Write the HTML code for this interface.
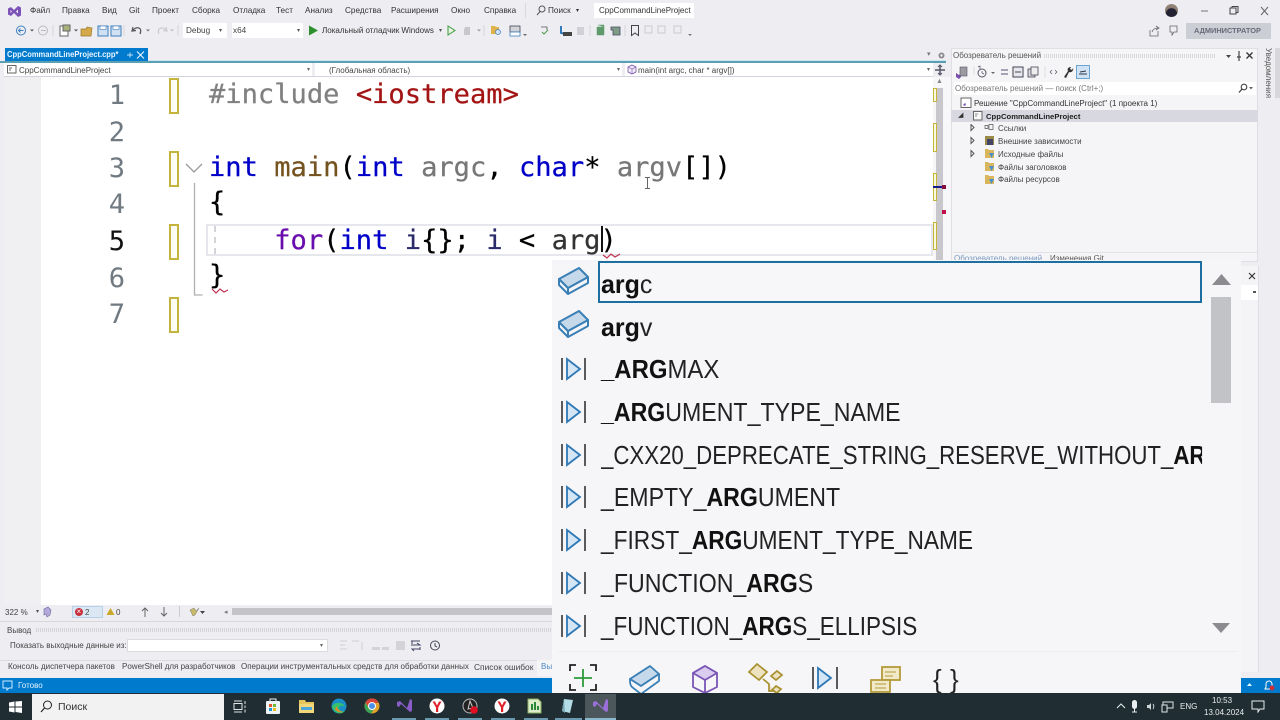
<!DOCTYPE html>
<html><head><meta charset="utf-8">
<style>
*{box-sizing:border-box}
html,body{margin:0;padding:0;width:1280px;height:720px;overflow:hidden;background:#eeeef2}
body{position:relative;font-family:"Liberation Sans",sans-serif;color:#333}
.a{position:absolute;white-space:nowrap}
.m{font-size:8.2px;top:5px;line-height:12px;color:#333}
.t{font-size:8.2px;line-height:12px;color:#444}
.c{position:absolute;white-space:pre;font-family:"DejaVu Sans Mono",monospace;font-size:27.1px;line-height:36px;left:209px;color:#000;-webkit-text-stroke:.25px}
.n{position:absolute;left:101px;width:24px;text-align:right;font-family:"DejaVu Sans Mono",monospace;font-size:27.1px;line-height:36px;color:#707a80}
.y{position:absolute;left:169px;width:10px;height:36px;border:2px solid #c4b33c;background:#fdfdf4}
.k{color:#0000c8}.f{color:#74531f}.p{color:#808080}.s{color:#a31515}.r{color:#8f08c4}.g{color:#777}
.l{position:absolute;left:601px;font-size:26px;line-height:34px;white-space:pre;color:#222;transform-origin:0 50%}
.l b{color:#111;font-weight:700}
.i{position:absolute;left:558px}
.e{font-size:8px;line-height:12px;color:#444}
.b{background:#fff}
</style></head><body>

<!-- menu / title bar -->
<svg class="a" style="left:7px;top:5px" width="15" height="13" viewBox="0 0 15 13"><path d="M1 3.500L4 2l3 3 4-4 3 1.500v8L11 12 7 8l-3 3-3-1.500z" fill="#7d52b8"/><path d="M3.500 5v3L5 6.500zM11 4.500v4L9 6.500z" fill="#eeeef2"/></svg>
<span class="a m" style="left:30px">Файл</span>
<span class="a m" style="left:62px">Правка</span>
<span class="a m" style="left:102px">Вид</span>
<span class="a m" style="left:129px">Git</span>
<span class="a m" style="left:152px">Проект</span>
<span class="a m" style="left:192px">Сборка</span>
<span class="a m" style="left:233px">Отладка</span>
<span class="a m" style="left:276px">Тест</span>
<span class="a m" style="left:305px">Анализ</span>
<span class="a m" style="left:345px">Средства</span>
<span class="a m" style="left:391px">Расширения</span>
<span class="a m" style="left:451px">Окно</span>
<span class="a m" style="left:484px">Справка</span>
<div class="a" style="left:525px;top:3px;width:1px;height:15px;background:#d8d8de"></div>
<svg class="a" style="left:536px;top:5px" width="10" height="11" viewBox="0 0 10 11"><circle cx="6" cy="4" r="3" fill="none" stroke="#555"/><path d="M4 6.500L1 10" stroke="#555"/></svg>
<span class="a m" style="left:548px">Поиск</span>
<span class="a m" style="left:576px;font-size:6px">▾</span>
<div class="a" style="left:594px;top:3px;width:100px;height:15px;background:#fff"></div>
<span class="a m" style="left:599px;color:#333;font-size:8px">CppCommandLineProject</span>
<div class="a" style="left:1165px;top:4px;width:13px;height:13px;border-radius:50%;background:radial-gradient(circle at 50% 75%,#223 45%,#8a7a70 50%,#a08e80)"></div>
<svg class="a" style="left:1195px;top:4px" width="82" height="14" viewBox="0 0 82 14"><path d="M6 7h7" stroke="#777"/><rect x="35" y="4" width="6" height="6" fill="none" stroke="#444"/><path d="M37 4V2.500h6v6h-2" fill="none" stroke="#444"/><path d="M66 3l7 8M73 3l-7 8" stroke="#666"/></svg>

<!-- toolbar -->
<svg class="a" style="left:0;top:23px" width="700" height="15" viewBox="0 0 700 15">
<circle cx="21" cy="7.500" r="4.500" fill="none" stroke="#3f7fbf"/><path d="M23.500 7.500h-5m2-2l-2 2 2 2" fill="none" stroke="#3f7fbf"/>
<path d="M30 6.500h4l-2 2z" fill="#555"/>
<circle cx="43" cy="7.500" r="4.500" fill="none" stroke="#bbb"/><path d="M41 7.500h5" stroke="#bbb"/>
<path d="M53 2v11" stroke="#d4d4da"/>
<rect x="60" y="3" width="8" height="10" fill="#fff" stroke="#666"/><rect x="63" y="2" width="7" height="6" fill="#a8b27a" stroke="#666"/>
<path d="M74 6.500h4l-2 2z" fill="#555"/>
<path d="M81 6h5l1-2 5 1-1 8H81z" fill="#d3a94a" stroke="#9a7a2a" stroke-width=".7"/>
<rect x="98" y="3" width="10" height="10" fill="#cfe1f3" stroke="#3f7fbf"/><rect x="100" y="3" width="6" height="3.500" fill="#fff" stroke="#3f7fbf" stroke-width=".6"/>
<rect x="111" y="3" width="10" height="10" fill="#cfe1f3" stroke="#3f7fbf"/><rect x="113" y="3" width="6" height="3.500" fill="#fff" stroke="#3f7fbf" stroke-width=".6"/>
<path d="M124 2v11" stroke="#d4d4da"/>
<path d="M133 4l-1 4 4-.5M132.500 7.500C136 3 143 4 140 11" fill="none" stroke="#555" stroke-width="1.200"/>
<path d="M146 6.500h4l-2 2z" fill="#777"/>
<path d="M166 4l1 4-4-.5M166.500 7.500C163 3 156 5 159 11" fill="none" stroke="#ccc" stroke-width="1.200"/>
<path d="M170 6.500h4l-2 2z" fill="#bbb"/>
<path d="M178 2v11" stroke="#d4d4da"/>
<path d="M309 2.500l9 5-9 5z" fill="#2d8f2d"/>
<path d="M448 3v9l7-4.500z" fill="#e9f3e4" stroke="#3c9a3c"/>
<path d="M465 4h5v8h-6v-5z" fill="#c8c8cc"/>
<path d="M477 6.500h4l-2 2z" fill="#999"/>
<path d="M484 2v11" stroke="#d4d4da"/>
<path d="M491 3h4l1 1h3v7h-8z" fill="#e0b24a"/><circle cx="498" cy="9" r="2.500" fill="#cfe1f3" stroke="#3f7fbf" stroke-width=".7"/>
<rect x="510" y="3" width="10" height="6" fill="#d0d4d8" stroke="#445" stroke-width=".8"/><rect x="510" y="9" width="10" height="4" fill="#fff" stroke="#3f7fbf" stroke-width=".8"/>
<path d="M523 11h4l-2 2z" fill="#666"/>
<path d="M541 4h6v3" fill="none" stroke="#555" stroke-width=".8"/><path d="M542 9l2 2 4-4" fill="none" stroke="#4a9a4a"/>
<path d="M561 3v7l5 1" fill="none" stroke="#1f6fb5" stroke-width="1.800"/><rect x="563" y="9" width="9" height="4" fill="#444"/>
<rect x="577" y="4" width="7" height="8" fill="#d0d0d6"/>
<path d="M590 2v11" stroke="#d4d4da"/>
<path d="M597 4h7v8h-7zM598 2h6v2" fill="#5f9a6c" stroke="#5f9a6c" stroke-width=".5"/>
<path d="M611 4h9v8h-7v-5h-2z" fill="#7f9d86" stroke="#446" stroke-width=".8"/>
<path d="M625 2v11" stroke="#d4d4da"/>
<path d="M631.500 2.500h7v10l-3.500-2.500-3.500 2.500z" fill="none" stroke="#444"/>
<path d="M645 3h7v7h-7z" fill="none" stroke="#ccc"/><path d="M658 3h7v7h-7z" fill="none" stroke="#ccc"/><path d="M674 3h7v7h-7z" fill="none" stroke="#ccc"/>
<path d="M688 11h4l-2 2z" fill="#777"/>
</svg>
<div class="a b" style="left:183px;top:23px;width:44px;height:15px"></div>
<span class="a t" style="left:186px;top:25px">Debug</span><span class="a" style="left:219px;top:27px;font-size:6px;color:#555">▾</span>
<div class="a b" style="left:232px;top:23px;width:71px;height:15px"></div>
<span class="a t" style="left:233px;top:25px">x64</span><span class="a" style="left:297px;top:27px;font-size:6px;color:#555">▾</span>
<span class="a t" style="left:322px;top:25px;color:#333;font-size:8px">Локальный отладчик Windows</span>
<span class="a" style="left:439px;top:27px;font-size:6px;color:#555">▾</span>
<svg class="a" style="left:1148px;top:24px" width="34" height="14" viewBox="0 0 34 14"><path d="M2 6v6h8V7M4 8c1-3 3-4 6-4M8 2l3 2-3 2" fill="none" stroke="#666" stroke-width=".8"/><path d="M22 2h7v6h-3l-2 3V8h-2z" fill="none" stroke="#666" stroke-width=".8"/></svg>
<div class="a" style="left:1186px;top:23px;width:85px;height:16px;background:#ccced6"></div>
<span class="a" style="left:1194px;top:25px;font-size:7.4px;line-height:12px;font-weight:700;color:#6a6a78">АДМИНИСТРАТОР</span>

<!-- doc tabs -->
<div class="a" style="left:5px;top:48px;width:143px;height:14px;background:#007acc"></div>
<span class="a" style="left:7px;top:49px;font-size:8.2px;line-height:12px;font-weight:700;color:#eaf6ff;transform:scaleX(.925);transform-origin:0 0">CppCommandLineProject.cpp*</span>
<svg class="a" style="left:126px;top:50px" width="20" height="10" viewBox="0 0 20 10"><path d="M1 5h6M4 2.500v5" stroke="#bfe0f6"/><path d="M11 1.500l7 7M18 1.500l-7 7" stroke="#e8f5ff" stroke-width="1.100"/></svg>
<div class="a" style="left:0;top:61px;width:946px;height:2px;background:#5a9fb4"></div>
<div class="a" style="left:148px;top:60px;width:798px;height:1px;background:#cfe5f1"></div>
<span class="a" style="left:927px;top:50px;font-size:7px;color:#777">▾</span>
<svg class="a" style="left:937px;top:51px" width="9" height="9" viewBox="0 0 9 9"><circle cx="4.500" cy="4.500" r="3" fill="#8a8a90"/><circle cx="4.500" cy="4.500" r="1.200" fill="#eeeef2"/></svg>

<!-- nav bar -->
<div class="a b" style="left:4px;top:63px;width:929px;height:13px"></div>
<div class="a" style="left:4px;top:76px;width:929px;height:1px;background:#d0d4dc"></div>
<svg class="a" style="left:7px;top:65px" width="10" height="9" viewBox="0 0 10 9"><rect x=".5" y=".5" width="8.500" height="7.500" fill="#fff" stroke="#666"/><path d="M2 3h3M2 5h2" stroke="#666"/></svg>
<span class="a e" style="left:19px;top:65px">CppCommandLineProject</span>
<span class="a" style="left:307px;top:66px;font-size:6px;color:#666">▾</span>
<div class="a" style="left:312px;top:63px;width:3px;height:13px;background:#eeeef2"></div>
<span class="a e" style="left:329px;top:65px">(Глобальная область)</span>
<span class="a" style="left:617px;top:66px;font-size:6px;color:#666">▾</span>
<div class="a" style="left:622px;top:63px;width:3px;height:13px;background:#eeeef2"></div>
<svg class="a" style="left:627px;top:64px" width="10" height="11" viewBox="0 0 10 11"><path d="M5 1l4 2v5l-4 2-4-2V3z" fill="#f0e9f8" stroke="#7a55a8" stroke-width=".8"/><path d="M1 3l4 2 4-2M5 5v5" fill="none" stroke="#7a55a8" stroke-width=".6"/></svg>
<span class="a e" style="left:638px;top:65px">main(int argc, char * argv[])</span>
<span class="a" style="left:927px;top:66px;font-size:6px;color:#666">▾</span>
<svg class="a" style="left:934px;top:64px" width="12" height="12" viewBox="0 0 12 12"><path d="M6 1v10M1 6h10" stroke="#556" stroke-width="1.500"/><path d="M4 3l2-2 2 2M4 9l2 2 2-2" fill="none" stroke="#556"/></svg>

<!-- editor -->
<div class="a" style="left:0;top:77px;width:933px;height:528px;background:#fff"></div>
<div class="a" style="left:4px;top:77px;width:37px;height:528px;background:#f0f0f2"></div>
<div class="a" style="left:0;top:77px;width:4px;height:528px;background:#eeeef2"></div>

<div class="a" style="left:206px;top:224px;width:727px;height:32px;border:2px solid #e6e7ec;background:#fff"></div>
<div class="a" style="left:214px;top:226px;width:0;height:28px;border-left:2px dashed #d4d4d8"></div>

<div class="n" style="top:78px">1</div>
<div class="n" style="top:115px">2</div>
<div class="n" style="top:151px">3</div>
<div class="n" style="top:187px">4</div>
<div class="n" style="top:224px;color:#111">5</div>
<div class="n" style="top:261px">6</div>
<div class="n" style="top:297px">7</div>

<div class="y" style="top:78px"></div>
<div class="y" style="top:151px"></div>
<div class="y" style="top:224px"></div>
<div class="y" style="top:297px"></div>

<svg class="a" style="left:184px;top:160px" width="30" height="140" viewBox="0 0 30 140"><path d="M2 4l8 8 8-8" fill="none" stroke="#9a9a9e" stroke-width="1.300"/><path d="M10.500 23v112h8" fill="none" stroke="#b0b0b4" stroke-width="1.300"/></svg>

<div class="c" style="top:77px"><span class="p">#include</span> <span class="s">&lt;iostream&gt;</span></div>
<div class="c" style="top:150px"><span class="k">int</span> <span class="f">main</span>(<span class="k">int</span> <span class="g">argc</span>, <span class="k">char</span>* <span class="g">argv</span>[])</div>
<div class="c" style="top:185px">{</div>
<div class="c" style="top:223px">    <span style="color:#6a0dad">for</span>(<span class="k">int</span> <span style="color:#2b2b6b">i</span>{}; <span style="color:#2b2b6b">i</span> &lt; <span style="color:#333">arg</span>)</div>
<div class="c" style="top:258px">}</div>
<div class="a" style="left:601px;top:226px;width:1.500px;height:26px;background:#111"></div>
<svg class="a" style="left:211px;top:287px" width="18" height="8" viewBox="0 0 18 8"><path d="M1 2l4 4 4-4 4 3 4-2" fill="none" stroke="#c03050" stroke-width="1.200"/></svg>
<svg class="a" style="left:602px;top:251px" width="20" height="8" viewBox="0 0 20 8"><path d="M1 4l4 3 4-4 4 3 5-3" fill="none" stroke="#c03050" stroke-width="1.200"/></svg>
<svg class="a" style="left:644px;top:177px" width="7" height="12" viewBox="0 0 7 12"><path d="M1 .5h5M1 11.500h5M3.500 .5v11" stroke="#666" fill="none"/></svg>

<!-- editor scrollbar -->
<div class="a" style="left:933px;top:77px;width:18px;height:528px;background:#f7f7f9"></div>
<div class="a" style="left:936px;top:88px;width:7px;height:517px;background:#c8c8cc"></div>
<span class="a" style="left:936px;top:78px;font-size:7px;color:#888">▲</span>
<div class="a" style="left:933px;top:88px;width:4px;height:14px;background:#fbf8e0;border:1px solid #c4b33c"></div>
<div class="a" style="left:933px;top:123px;width:4px;height:29px;background:#fbf8e0;border:1px solid #c4b33c"></div>
<div class="a" style="left:933px;top:173px;width:4px;height:28px;background:#fbf8e0;border:1px solid #c4b33c"></div>
<div class="a" style="left:933px;top:222px;width:4px;height:28px;background:#fbf8e0;border:1px solid #c4b33c"></div>
<div class="a" style="left:933px;top:186px;width:10px;height:2px;background:#1a1a8a"></div>
<div class="a" style="left:942px;top:185px;width:4px;height:4px;background:#8a1040"></div>
<div class="a" style="left:942px;top:210px;width:4px;height:4px;background:#c01048"></div>

<!-- editor footer -->
<div class="a" style="left:0;top:605px;width:946px;height:14px;background:#eeeef2"></div>
<span class="a e" style="left:5px;top:607px;color:#444">322 %</span>
<span class="a" style="left:36px;top:608px;font-size:6px;color:#555">▾</span>
<svg class="a" style="left:42px;top:606px" width="10" height="12" viewBox="0 0 10 12"><path d="M2 3l4-2 3 3-1 5-3 2-1-3-2 1z" fill="#b3a8d9" stroke="#666aa0" stroke-width=".6"/></svg>
<div class="a" style="left:72px;top:606px;width:31px;height:12px;background:#dbe8f4;border:1px solid #b7d2e8"></div>
<div class="a" style="left:75px;top:608px;width:8px;height:8px;border-radius:50%;background:#c8303c"></div>
<span class="a" style="left:76.500px;top:608px;font-size:8px;line-height:8px;color:#fff">×</span>
<span class="a e" style="left:85px;top:607px">2</span>
<svg class="a" style="left:106px;top:607px" width="9" height="9" viewBox="0 0 9 9"><path d="M4.500 1L8.500 8h-8z" fill="#c8a828"/></svg>
<span class="a e" style="left:116px;top:607px">0</span>
<svg class="a" style="left:140px;top:606px" width="30" height="12" viewBox="0 0 30 12"><path d="M5 11V2M2 5l3-3 3 3M24 1v9M21 7l3 3 3-3" fill="none" stroke="#666"/></svg>
<div class="a" style="left:179px;top:606px;width:1px;height:11px;background:#ccc"></div>
<svg class="a" style="left:188px;top:606px" width="18" height="12" viewBox="0 0 18 12"><path d="M2 4l4-2 2 3 3-3-4 7-2 1z" fill="#c9b968" stroke="#777" stroke-width=".5"/><path d="M12 5h5l-2.500 3z" fill="#444"/></svg>
<span class="a" style="left:224px;top:608px;font-size:7px;color:#777">◂</span>
<div class="a" style="left:232px;top:608px;width:320px;height:7px;background:#c4c4c8"></div>

<!-- output -->
<div class="a" style="left:0;top:621px;width:552px;height:1px;background:#d8d8dc"></div>
<span class="a e" style="left:7px;top:625px">Вывод</span>
<div class="a" style="left:36px;top:628px;width:516px;height:4px;background:repeating-linear-gradient(90deg,#d4d4d8 0 1px,transparent 1px 2px)"></div>
<span class="a e" style="left:10px;top:640px">Показать выходные данные из:</span>
<div class="a b" style="left:127px;top:639px;width:201px;height:13px;border:1px solid #dcdce0"></div>
<span class="a" style="left:320px;top:642px;font-size:6px;color:#666">▾</span>
<svg class="a" style="left:332px;top:638px" width="112" height="15" viewBox="0 0 112 15"><path d="M8 3h7M8 7h5M8 11h7M20 3h7M30 4v8" stroke="#cfcfd4" fill="none"/><path d="M40 9h8v3h-8zM50 9h7v3h-7zM64 3h9v9h-9z" fill="#d4d4d8"/><path d="M79 3h9M79 7h9l-3-2M88 11h-8l2 2M80 3v3M88 9v3" stroke="#446" fill="none"/><circle cx="103" cy="7.500" r="4.500" fill="none" stroke="#445" /><path d="M103 5v3l2 1" fill="none" stroke="#445"/></svg>

<!-- bottom tabs -->
<div class="a" style="left:0;top:660px;width:552px;height:16px;background:#eeeef2"></div>
<div class="a" style="left:0;top:660px;width:552px;height:1px;background:#dcdce0"></div>
<span class="a e" style="left:8px;top:661px">Консоль диспетчера пакетов</span>
<span class="a e" style="left:122px;top:661px">PowerShell для разработчиков</span>
<span class="a e" style="left:241px;top:661px">Операции инструментальных средств для обработки данных</span>
<span class="a e" style="left:474px;top:661px;font-size:8.4px">Список ошибок</span>
<div class="a" style="left:537px;top:660px;width:15px;height:16px;background:#f5f5f8"></div>
<span class="a e" style="left:541px;top:661px;color:#4a86c0">Вы</span>

<!-- status bar -->
<div class="a" style="left:0;top:678px;width:1280px;height:15px;background:#007acc"></div>
<svg class="a" style="left:2px;top:680px" width="12" height="11" viewBox="0 0 12 11"><path d="M1 1h9v7H7L5 10V8H1z" fill="none" stroke="#cfeaff"/></svg>
<span class="a e" style="left:18px;top:680px;color:#e8f5ff">Готово</span>

<!-- solution explorer -->
<div class="a" style="left:951px;top:48px;width:307px;height:214px;background:#f5f5f7;border:1px solid #e0e0e4"></div>
<span class="a e" style="left:953px;top:50px;color:#555">Обозреватель решений</span>
<div class="a" style="left:1044px;top:54px;width:172px;height:4px;background:repeating-linear-gradient(90deg,#d8d8dc 0 1px,transparent 1px 2px)"></div>
<svg class="a" style="left:1224px;top:50px" width="30" height="12" viewBox="0 0 30 12"><path d="M2 5h5l-2.500 3z" fill="#444"/><path d="M15 1v6M13 7h4M15 7v4" stroke="#444" stroke-width="1.200"/><path d="M22.500 2.500l6 6M28.500 2.500l-6 6" stroke="#333" stroke-width="1.300"/></svg>
<svg class="a" style="left:954px;top:64px" width="140" height="16" viewBox="0 0 140 16">
<path d="M2 9l3 2 2-2v4l-2 2-3-2z" fill="#7a4fb0"/><rect x="6" y="3" width="7" height="9" fill="#9a9aa0" stroke="#556" stroke-width=".6"/>
<path d="M20 2v9" stroke="#ddd"/>
<circle cx="28" cy="9" r="4" fill="none" stroke="#556"/><path d="M28 7v2l2 1M24 3l2-1v3" fill="none" stroke="#556" stroke-width=".7"/>
<path d="M37 8h4l-2 2z" fill="#666"/>
<path d="M47 6h7M47 10h7" stroke="#557" stroke-width=".9"/>
<rect x="59" y="3" width="10" height="10" fill="#e8e8ec" stroke="#445"/><path d="M61 8h6" stroke="#445"/>
<rect x="74" y="5" width="7" height="8" fill="#d8d8dc" stroke="#445" stroke-width=".8"/><rect x="77" y="3" width="7" height="8" fill="#eee" stroke="#445" stroke-width=".8"/>
<path d="M91 2v12" stroke="#ddd"/>
<path d="M98 6l-2 2 2 2M101 6l2 2-2 2" fill="none" stroke="#556" stroke-width=".7"/>
<path d="M110 13l4-6c-1-2 0-4 3-4l-1 2 2 1 1-2c1 3-2 5-4 4l-3 6z" fill="#333"/>
<rect x="122.500" y="1.500" width="13" height="13" fill="#cfe3f4" stroke="#6aa5d3"/><path d="M125 10h8M126 8l6-1" stroke="#334" stroke-width="1.100"/>
</svg>
<div class="a b" style="left:954px;top:82px;width:302px;height:13px"></div>
<span class="a e" style="left:955px;top:83px;color:#777">Обозреватель решений — поиск (Ctrl+;)</span>
<svg class="a" style="left:1238px;top:83px" width="16" height="11" viewBox="0 0 16 11"><circle cx="6" cy="4" r="2.800" fill="none" stroke="#444" stroke-width="1.100"/><path d="M4 6L1 9.500" stroke="#444" stroke-width="1.300"/><path d="M11 4h4l-2 2.500z" fill="#666"/></svg>

<svg class="a" style="left:960px;top:97px" width="14" height="12" viewBox="0 0 14 12"><rect x="1" y="1" width="10" height="9.500" fill="#fff" stroke="#666"/><path d="M3 8l2-2 1 1-1 2z" fill="#7a4fb0"/></svg>
<span class="a e" style="left:974px;top:98px;color:#333">Решение "CppCommandLineProject"  (1 проекта 1)</span>
<div class="a" style="left:951px;top:110px;width:307px;height:12px;background:#d8d9e0"></div>
<span class="a" style="left:958px;top:112px;font-size:7px;line-height:8px;color:#333">◢</span>
<svg class="a" style="left:973px;top:111px" width="10" height="10" viewBox="0 0 10 10"><rect x=".5" y=".5" width="8.500" height="8.500" fill="#f8f8f8" stroke="#666"/><path d="M2 3h3M2 5h2" stroke="#666" stroke-width=".7"/></svg>
<span class="a" style="left:986px;top:111px;font-size:7.7px;line-height:12px;font-weight:700;color:#222">CppCommandLineProject</span>
<svg class="a" style="left:968px;top:124px" width="26" height="62" viewBox="0 0 26 62"><path d="M3 .5l3 3-3 3zM3 13.500l3 3-3 3zM3 26.500l3 3-3 3z" fill="none" stroke="#555"/>
<path d="M17 1.500h3v3h-3zM21 .5h4v5h-4z" fill="none" stroke="#555" stroke-width=".7"/>
<rect x="17" y="12" width="9" height="9" fill="#9a8a4a"/><rect x="19" y="15" width="6" height="6" fill="#446"/>
<path d="M17 25h3l1 1h5v8h-9z" fill="#d9b65c"/><path d="M21 29h5l-2.500 5z" fill="#4a90c8"/>
<path d="M17 38h3l1 1h5v8h-9z" fill="#d9b65c"/><path d="M21 42h5l-2.500 5z" fill="#4a90c8"/>
<path d="M17 51h3l1 1h5v8h-9z" fill="#d9b65c"/><path d="M21 55h5l-2.500 5z" fill="#4a90c8"/></svg>
<span class="a e" style="left:998px;top:123px;color:#444">Ссылки</span>
<span class="a e" style="left:998px;top:136px;color:#444">Внешние зависимости</span>
<span class="a e" style="left:998px;top:149px;color:#444">Исходные файлы</span>
<span class="a e" style="left:998px;top:162px;color:#444">Файлы заголовков</span>
<span class="a e" style="left:998px;top:174px;color:#444">Файлы ресурсов</span>
<div class="a" style="left:953px;top:252px;width:304px;height:1px;background:#e2e2e6"></div>
<span class="a e" style="left:954px;top:253px;color:#7a9ac0">Обозреватель решений</span>
<span class="a e" style="left:1050px;top:253px;color:#555">Изменения Git</span>

<!-- side -->
<div class="a" style="left:1263px;top:48px;font-size:8px;line-height:10px;color:#555;writing-mode:vertical-rl;white-space:nowrap">Уведомления</div>
<div class="a" style="left:1275px;top:48px;width:5px;height:50px;background:#d8d8dc"></div>

<!-- properties panel behind -->
<div class="a" style="left:1230px;top:266px;width:29px;height:406px;background:#f4f4f6;border-right:1px solid #dedee4"></div>
<div class="a b" style="left:1241px;top:285px;width:17px;height:15px"></div>
<svg class="a" style="left:1248px;top:272px" width="8" height="8" viewBox="0 0 8 8"><path d="M1 1l6 6M7 1l-6 6" stroke="#333" stroke-width="1.200"/></svg>
<div class="a" style="left:1253px;top:291px;width:3px;height:2px;background:#555"></div>

<!-- popup -->
<div class="a" style="left:552px;top:260px;width:689px;height:433px;background:#f6f6f8"></div>
<div class="a" style="left:598px;top:261px;width:604px;height:42px;border:2px solid #1c6f9e;background:#f7f7f9"></div>
<div class="a" style="left:558px;top:651px;width:680px;height:1px;background:#eeeef1"></div>

<svg class="a i" style="top:267px" width="32" height="30" viewBox="0 0 32 30"><path d="M1 18v-6L10 21v6zM10 21L30 10v6L10 27z" fill="#f6f6f8" stroke="#3a7fb5" stroke-width="2" stroke-linejoin="round"/><path d="M1 12L21 1l9 9-20 11z" fill="#c5d9ea" stroke="#3a7fb5" stroke-width="2" stroke-linejoin="round"/></svg>
<svg class="a i" style="top:310px" width="32" height="30" viewBox="0 0 32 30"><path d="M1 18v-6L10 21v6zM10 21L30 10v6L10 27z" fill="#f6f6f8" stroke="#3a7fb5" stroke-width="2" stroke-linejoin="round"/><path d="M1 12L21 1l9 9-20 11z" fill="#c5d9ea" stroke="#3a7fb5" stroke-width="2" stroke-linejoin="round"/></svg>

<svg class="a" style="left:0;top:0;pointer-events:none" width="1280" height="693" viewBox="0 0 1280 693">
<path d="M562 358v22M585 358v22" stroke="#333" stroke-width="1.600"/><path d="M567 359v20l13-10z" fill="#d4e6f5" stroke="#2e78b5" stroke-width="1.800"/>
<path d="M562 401v22M585 401v22" stroke="#333" stroke-width="1.600"/><path d="M567 402v20l13-10z" fill="#d4e6f5" stroke="#2e78b5" stroke-width="1.800"/>
<path d="M562 444v22M585 444v22" stroke="#333" stroke-width="1.600"/><path d="M567 445v20l13-10z" fill="#d4e6f5" stroke="#2e78b5" stroke-width="1.800"/>
<path d="M562 486v22M585 486v22" stroke="#333" stroke-width="1.600"/><path d="M567 487v20l13-10z" fill="#d4e6f5" stroke="#2e78b5" stroke-width="1.800"/>
<path d="M562 529v22M585 529v22" stroke="#333" stroke-width="1.600"/><path d="M567 530v20l13-10z" fill="#d4e6f5" stroke="#2e78b5" stroke-width="1.800"/>
<path d="M562 572v22M585 572v22" stroke="#333" stroke-width="1.600"/><path d="M567 573v20l13-10z" fill="#d4e6f5" stroke="#2e78b5" stroke-width="1.800"/>
<path d="M562 615v22M585 615v22" stroke="#333" stroke-width="1.600"/><path d="M567 616v20l13-10z" fill="#d4e6f5" stroke="#2e78b5" stroke-width="1.800"/>
<!-- scroll -->
<path d="M1212 285l9.500-11 9.500 11z" fill="#8c8c90"/>
<rect x="1211" y="297" width="20" height="106" fill="#c2c3c6"/>
<path d="M1212 623h18l-9 10z" fill="#8c8c90"/>
<!-- filter icons -->
<path d="M570 671v-6h6M590 665h6v6M596 684v6h-6M576 690h-6v-6" fill="none" stroke="#222" stroke-width="1.800"/><path d="M583 669v18M574 678h18" stroke="#2e9a3a" stroke-width="1.800"/>
<path d="M630 679l20-13 9 8-18 12z" fill="#c5d9ea" stroke="#3a7fb5" stroke-width="1.800" stroke-linejoin="round"/><path d="M630 679c0 4 0 6 2 8l9 7 18-13v-7l-18 12z" fill="#f6f6f8" stroke="#3a7fb5" stroke-width="1.800" stroke-linejoin="round"/>
<path d="M705 666l12 7v14l-12 6-12-6v-14z" fill="#f6f6f8" stroke="#7a55b5" stroke-width="1.800" stroke-linejoin="round"/><path d="M693 673l12 7 12-7-12-7z" fill="#d9ccee" stroke="#7a55b5" stroke-width="1.800" stroke-linejoin="round"/><path d="M705 680v13" stroke="#7a55b5" stroke-width="1.800"/>
<path d="M749 672l8-8 10 8-8 8z" fill="#ece2c0" stroke="#a8902f" stroke-width="1.700"/><path d="M771 676l6-5 5 4-6 5zM772 690l4-4 5 3-4 4zM763 679l6 5v7h6" fill="#ece2c0" stroke="#a8902f" stroke-width="1.700"/>
<path d="M813 667v22M837 667v22" stroke="#333" stroke-width="1.600"/><path d="M818 668v20l13-10z" fill="#d4e6f5" stroke="#2e78b5" stroke-width="1.800"/>
<rect x="882" y="667" width="18" height="13" fill="#f1e9c8" stroke="#b39a3a" stroke-width="1.800"/><path d="M885 672h11M885 676h8" stroke="#b39a3a"/>
<rect x="871" y="680" width="19" height="12" fill="#f1e9c8" stroke="#b39a3a" stroke-width="1.800"/><path d="M875 684h11M875 688h11" stroke="#b39a3a"/>
</svg>

<div class="l" style="top:267px;transform:scaleX(.96)"><b>arg</b>c</div>
<div class="l" style="top:310px;transform:scaleX(.96)"><b>arg</b>v</div>
<div class="l" style="top:352px;transform:scaleX(.92)"><b>_ARG</b>MAX</div>
<div class="l" style="top:395px;transform:scaleX(.89)"><b>_ARG</b>UMENT_TYPE_NAME</div>
<div class="l" style="top:438px;width:703px;overflow:hidden;transform:scaleX(.855)">_CXX20_DEPRECATE_STRING_RESERVE_WITHOUT_<b>ARG</b></div>
<div class="l" style="top:480px;transform:scaleX(.89)">_EMPTY_<b>ARG</b>UMENT</div>
<div class="l" style="top:523px;transform:scaleX(.873)">_FIRST_<b>ARG</b>UMENT_TYPE_NAME</div>
<div class="l" style="top:566px;transform:scaleX(.89)">_FUNCTION_<b>ARG</b>S</div>
<div class="l" style="top:609px;transform:scaleX(.865)">_FUNCTION_<b>ARG</b>S_ELLIPSIS</div>
<span class="a" style="left:933px;top:664px;font-size:26px;line-height:30px;color:#222">{</span>
<span class="a" style="left:950px;top:664px;font-size:26px;line-height:30px;color:#222">}</span>

<!-- status bar right -->
<svg class="a" style="left:1238px;top:678px" width="40" height="15" viewBox="0 0 40 15"><path d="M9 8l2.500-3 2.500 3z" fill="#dff" /><path d="M27 11h8l-1-2V6a3 3 0 0 0-6 0v3z" fill="none" stroke="#fff"/><circle cx="34" cy="10" r="2.500" fill="#c8303c"/></svg>

<!-- taskbar -->
<div class="a" style="left:0;top:693px;width:1280px;height:27px;background:#202d33"></div>
<svg class="a" style="left:9px;top:701px" width="13" height="12" viewBox="0 0 13 12"><path d="M0 1.500l5.500-1V5.500H0zM6.500 .5L13 0V5.500H6.500zM0 6.500h5.500v5L0 10.500zM6.500 6.500H13V12l-6.500-1z" fill="#fff"/></svg>
<div class="a" style="left:32px;top:694px;width:192px;height:26px;background:#f2f2f2"></div>
<svg class="a" style="left:40px;top:700px" width="13" height="13" viewBox="0 0 13 13"><circle cx="7.500" cy="5" r="4" fill="none" stroke="#222"/><path d="M4.500 8L1 12" stroke="#222" stroke-width="1.200"/></svg>
<span class="a" style="left:58px;top:700px;font-size:10.500px;line-height:14px;color:#333">Поиск</span>
<svg class="a" style="left:233px;top:700px" width="14" height="13" viewBox="0 0 14 13"><path d="M1 1h8M1 12h8" stroke="#dfe6e8"/><rect x="1" y="3.500" width="8" height="6" fill="none" stroke="#dfe6e8"/><path d="M12 1v3M12 5.500v2.500M12 9.500v3" stroke="#dfe6e8"/></svg>
<svg class="a" style="left:264px;top:696px" width="18" height="20" viewBox="0 0 18 20"><rect x="2" y="5" width="14" height="13" rx="1" fill="#eef3f6"/><path d="M6 5V3h6v2" fill="none" stroke="#eef3f6"/><rect x="5" y="8" width="3" height="3" fill="#e8562a"/><rect x="9" y="8" width="3" height="3" fill="#6fb83c"/><rect x="5" y="12" width="3" height="3" fill="#1f9ad6"/><rect x="9" y="12" width="3" height="3" fill="#f5bb1c"/></svg>
<svg class="a" style="left:298px;top:698px" width="17" height="16" viewBox="0 0 17 16"><path d="M1 2h6l1 2h8v11H1z" fill="#e8c55a"/><rect x="1" y="6" width="15" height="9" fill="#f2d77a"/><rect x="3" y="9" width="11" height="3" fill="#4da6d8"/></svg>
<svg class="a" style="left:331px;top:698px" width="16" height="16" viewBox="0 0 16 16"><circle cx="8" cy="8" r="7.500" fill="#1a8fc7"/><path d="M1 9c1-5 11-6 13 0-2-2-6-2-6 1 0 3 4 4 6 3-3 4-11 3-13-4z" fill="#37c26a"/><path d="M4 11c2 3 5 4 8 3-4-1-6-3-6-6z" fill="#e8842a"/></svg>
<svg class="a" style="left:364px;top:698px" width="16" height="16" viewBox="0 0 16 16"><circle cx="8" cy="8" r="7.500" fill="#e2a32b"/><path d="M8 .5A7.500 7.500 0 0 0 1.500 4.500L5 10l3-5h6.500A7.500 7.500 0 0 0 8 .5z" fill="#d8433a"/><path d="M1.500 4.500A7.500 7.500 0 0 0 7 15.500L10 11H5z" fill="#3aa356"/><circle cx="8" cy="8" r="3.500" fill="#4a8fe8" stroke="#fff"/></svg>
<svg class="a" style="left:396px;top:698px" width="16" height="16" viewBox="0 0 16 16"><path d="M1 4l3-1 7 7 3-9 2 1v11l-2 1-9-8-2 3-2-1z" fill="#8a5cc8"/></svg>
<svg class="a" style="left:429px;top:698px" width="16" height="16" viewBox="0 0 16 16"><circle cx="8" cy="8" r="7.500" fill="#fff"/><path d="M3.500 3.500h2.500L8 7.500l2-4h2.500L9.200 9.500V14H7V9.500z" fill="#e01e26"/></svg>
<svg class="a" style="left:462px;top:698px" width="17" height="17" viewBox="0 0 17 17"><circle cx="8" cy="8" r="7" fill="#222" stroke="#bbb"/><path d="M8 3l3 7-5 1z" fill="none" stroke="#ccc"/><circle cx="12" cy="12" r="3.800" fill="#e01020"/></svg>
<svg class="a" style="left:494px;top:698px" width="16" height="16" viewBox="0 0 16 16"><circle cx="8" cy="8" r="7.500" fill="#fff"/><path d="M3.500 3.500h2.500L8 7.500l2-4h2.500L9.200 9.500V14H7V9.500z" fill="#e01e26"/></svg>
<svg class="a" style="left:527px;top:698px" width="15" height="16" viewBox="0 0 15 16"><path d="M1 1h10l3 3v11H1z" fill="#dfeccc" stroke="#8ab060"/><path d="M4 12V6h2v6zM7 12V4h2v8zM10 12V8h2v4z" fill="#2a8a3a"/></svg>
<svg class="a" style="left:560px;top:698px" width="15" height="16" viewBox="0 0 15 16"><path d="M4 1l9 1-3 13-8-2z" fill="#b4dce6"/><path d="M4 1l-2 12 3 2z" fill="#79aab8"/></svg>
<div class="a" style="left:585px;top:694px;width:31px;height:26px;background:#4c575c"></div>
<svg class="a" style="left:592px;top:698px" width="16" height="16" viewBox="0 0 16 16"><path d="M1 4l3-1 7 7 3-9 2 1v11l-2 1-9-8-2 3-2-1z" fill="#9a70d8"/></svg>
<div class="a" style="left:392px;top:718px;width:24px;height:2px;background:#6a9ab0"></div>
<div class="a" style="left:425px;top:718px;width:24px;height:2px;background:#6a9ab0"></div>
<div class="a" style="left:458px;top:718px;width:24px;height:2px;background:#6a9ab0"></div>
<div class="a" style="left:491px;top:718px;width:24px;height:2px;background:#6a9ab0"></div>
<div class="a" style="left:524px;top:718px;width:24px;height:2px;background:#6a9ab0"></div>
<div class="a" style="left:555px;top:718px;width:27px;height:2px;background:#6a9ab0"></div>
<div class="a" style="left:585px;top:718px;width:31px;height:2px;background:#8ab8cc"></div>

<svg class="a" style="left:1116px;top:699px" width="70" height="15" viewBox="0 0 70 15"><path d="M1 9l4-4 4 4" fill="none" stroke="#e8eef0"/><rect x="16" y="1" width="5" height="9" rx="2.500" fill="#e8eef0"/><path d="M18.500 10v3M16 13h5" stroke="#e8eef0"/><path d="M31 6h2l2-2v7l-2-2h-2z" fill="#cdd6d8"/><path d="M37 5c1 1 1 4 0 5" fill="none" stroke="#cdd6d8"/><rect x="47" y="3" width="10" height="6" fill="none" stroke="#dfe6e8"/><rect x="46" y="6" width="5" height="7" fill="#202d33" stroke="#dfe6e8"/></svg>
<span class="a" style="left:1180px;top:701px;font-size:8px;line-height:11px;color:#e8eef0">ENG</span>
<span class="a" style="left:1212px;top:695px;font-size:8px;line-height:11px;color:#e8eef0">10:53</span>
<span class="a" style="left:1204px;top:707px;font-size:8px;line-height:11px;color:#e8eef0">13.04.2024</span>
<svg class="a" style="left:1251px;top:700px" width="14" height="13" viewBox="0 0 14 13"><path d="M1 1h12v8H9l-2 3V9H1z" fill="none" stroke="#e8eef0"/></svg>
</body></html>
